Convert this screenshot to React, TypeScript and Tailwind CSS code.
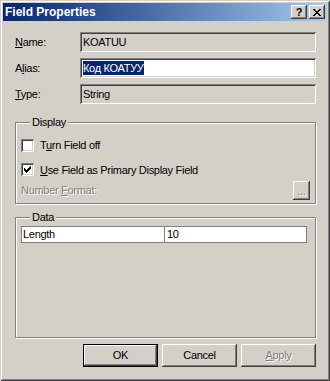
import type { ReactNode } from 'react';

const raised =
  'shadow-[inset_-1px_-1px_0_#404040,inset_1px_1px_0_#ffffff,inset_-2px_-2px_0_#808080,inset_2px_2px_0_#d4d0c8]';
const sunken =
  'shadow-[inset_1px_1px_0_#808080,inset_-1px_-1px_0_#ffffff,inset_2px_2px_0_#404040,inset_-2px_-2px_0_#d4d0c8]';

function FieldRow({ label, children }: { label: ReactNode; children: ReactNode }) {
  return (
    <div className="flex items-center h-[20px]">
      <div className="w-[65px] shrink-0">{label}</div>
      <div className="flex-1">{children}</div>
    </div>
  );
}

function GroupBox({ title, className, children }: { title: string; className?: string; children: ReactNode }) {
  return (
    <div
      className={`flex flex-col border border-[#808080] shadow-[inset_1px_1px_0_#ffffff,1px_1px_0_#ffffff] ${className ?? ''}`}
    >
      <span className="-mt-[8px] ml-[9px] px-[2px] w-fit bg-[#d4d0c8] leading-[14px]">{title}</span>
      {children}
    </div>
  );
}

function Checkbox({ checked }: { checked?: boolean }) {
  return (
    <div className={`w-[13px] h-[13px] bg-white ${sunken} flex items-center justify-center shrink-0`}>
      {checked && (
        <svg width="7" height="7" viewBox="0 0 7 7" shapeRendering="crispEdges">
          <path d="M0 2h1v3h-1z M1 3h1v3h-1z M2 4h1v3h-1z M3 3h1v3h-1z M4 2h1v3h-1z M5 1h1v3h-1z M6 0h1v3h-1z" fill="#000" />
        </svg>
      )}
    </div>
  );
}

function PushButton({ children, isDefault, disabled }: { children: ReactNode; isDefault?: boolean; disabled?: boolean }) {
  return (
    <div
      className={`w-[75px] h-[23px] flex items-center justify-center bg-[#d4d0c8] ${
        isDefault ? 'border border-black' : ''
      }`}
    >
      <div
        className={`w-full h-full flex items-center justify-center ${raised} ${
          disabled ? 'text-[#808080] [text-shadow:1px_1px_0_#ffffff]' : ''
        }`}
      >
        {children}
      </div>
    </div>
  );
}

export default function App() {
  return (
    <div
      className="w-[330px] h-[381px] bg-[#d4d0c8] p-[3px] flex flex-col text-[11px] tracking-[-0.3px] text-black shadow-[inset_1px_1px_0_#d4d0c8,inset_-1px_-1px_0_#404040,inset_2px_2px_0_#ffffff,inset_-2px_-2px_0_#808080]"
      style={{ fontFamily: '"Liberation Sans", Arial, sans-serif' }}
    >
      {/* Title bar */}
      <div className="h-[18px] flex items-center justify-between bg-gradient-to-r from-[#0a246a] to-[#a6caf0] pl-[2px] pr-[2px]">
        <span className="text-white font-bold text-[12px] tracking-normal leading-none">Field Properties</span>
        <div className="flex gap-[2px]">
          <div className={`w-[16px] h-[14px] bg-[#d4d0c8] ${raised} flex items-center justify-center font-bold text-[11px] leading-none`}>
            ?
          </div>
          <div className={`w-[16px] h-[14px] bg-[#d4d0c8] ${raised} flex items-center justify-center`}>
            <svg width="8" height="7" viewBox="0 0 8 7" shapeRendering="crispEdges">
              <path
                d="M0 0h2v1h-2z M6 0h2v1h-2z M1 1h2v1h-2z M5 1h2v1h-2z M2 2h4v1h-4z M3 3h2v1h-2z M2 4h4v1h-4z M1 5h2v1h-2z M5 5h2v1h-2z M0 6h2v1h-2z M6 6h2v1h-2z"
                fill="#000"
              />
            </svg>
          </div>
        </div>
      </div>

      {/* Body */}
      <div className="flex flex-col pl-[12px] pr-[11px] pt-[11px]">
        <div className="flex flex-col gap-[6px]">
          <FieldRow label={<><u>N</u>ame:</>}>
            <div className={`h-[20px] ${sunken} flex items-center pl-[3px]`}>KOATUU</div>
          </FieldRow>
          <FieldRow label={<>A<u>l</u>ias:</>}>
            <div className={`h-[20px] bg-white ${sunken} flex items-center pl-[3px]`}>
              <span className="bg-[#0a246a] text-white leading-[14px]">Код КОАТУУ</span>
            </div>
          </FieldRow>
          <FieldRow label={<><u>T</u>ype:</>}>
            <div className={`h-[20px] ${sunken} flex items-center pl-[3px]`}>String</div>
          </FieldRow>
        </div>

        <GroupBox title="Display" className="mt-[18px] h-[82px] pl-[5px] pr-[5px]">
          <div className="flex items-center gap-[6px] mt-[8px]">
            <Checkbox />
            <span>
              T<u>u</u>rn Field off
            </span>
          </div>
          <div className="flex items-center gap-[6px] mt-[8px]">
            <Checkbox checked />
            <span>
              <u>U</u>se Field as Primary Display Field
            </span>
          </div>
          <div className="flex items-center justify-between mt-[3px]">
            <span className="text-[#808080] [text-shadow:1px_1px_0_#ffffff]">
              Number <u>F</u>ormat:
            </span>
            <div
              className={`w-[17px] h-[19px] ${raised} flex items-end justify-center pb-[3px] text-[#808080] [text-shadow:1px_1px_0_#ffffff] leading-none`}
            >
              ...
            </div>
          </div>
        </GroupBox>

        <GroupBox title="Data" className="mt-[13px] h-[121px] pl-[5px] pr-[8px]">
          <div className="mt-[2px] h-[17px] bg-white border border-[#808080] flex">
            <div className="w-[143px] border-r border-[#808080] pl-[1px] leading-[15px]">Length</div>
            <div className="flex-1 pl-[2px] leading-[15px]">10</div>
          </div>
        </GroupBox>

        <div className="flex justify-end gap-[4px] mt-[6px]">
          <PushButton isDefault>OK</PushButton>
          <PushButton>Cancel</PushButton>
          <PushButton disabled>
            <u>A</u>pply
          </PushButton>
        </div>
      </div>
    </div>
  );
}
